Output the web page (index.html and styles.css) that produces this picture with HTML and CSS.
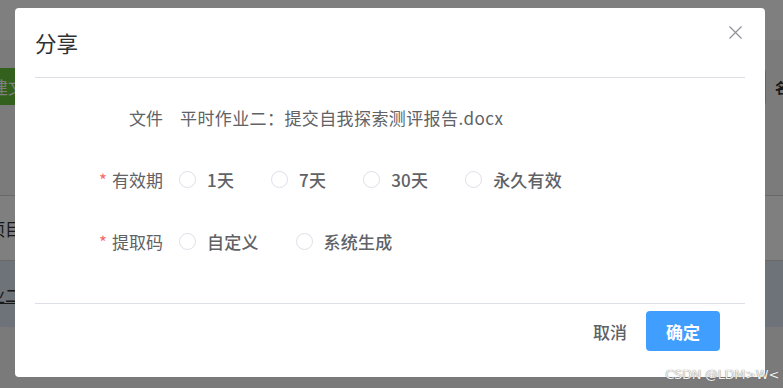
FILE: index.html
```html
<!DOCTYPE html>
<html lang="zh-CN">
<head>
  <meta charset="UTF-8">
  <meta name="viewport" content="width=device-width, initial-scale=1.0">
  <title>分享</title>
  <link rel="stylesheet" href="styles.css">
</head>
<body>
  <!-- page behind the dialog -->
  <div class="page">
    <div class="page-header"></div>
    <div class="toolbar">
      <button class="btn-green">新建文件夹</button>
      <div class="toolbar-right">
        <div class="search-box"></div>
        <span class="sort-label">名</span>
      </div>
    </div>
    <div class="table">
      <div class="table-row"><span class="cell-text">项目</span></div>
      <div class="table-row current"><span class="cell-link">作业二</span></div>
    </div>
  </div>

  <div class="mask"></div>

  <!-- share dialog -->
  <div class="dialog">
    <div class="dialog-header">
      <span class="dialog-title">分享</span>
      <button class="dialog-close" aria-label="关闭">
        <svg width="13" height="13" viewBox="0 0 13 13">
          <path d="M0.5 0.5 L12.5 12.5 M12.5 0.5 L0.5 12.5" stroke="#909399" stroke-width="1.3" fill="none"/>
        </svg>
      </button>
    </div>

    <div class="dialog-body">
      <div class="form-item">
        <label class="form-label">文件</label>
        <div class="form-content file-name">平时作业二：提交自我探索测评报告.docx</div>
      </div>
      <div class="form-item">
        <label class="form-label"><span class="required">*</span>有效期</label>
        <div class="form-content radio-group">
          <label class="radio"><span class="radio-dot"></span>1天</label>
          <label class="radio"><span class="radio-dot"></span>7天</label>
          <label class="radio"><span class="radio-dot"></span>30天</label>
          <label class="radio"><span class="radio-dot"></span>永久有效</label>
        </div>
      </div>
      <div class="form-item">
        <label class="form-label"><span class="required">*</span>提取码</label>
        <div class="form-content radio-group">
          <label class="radio"><span class="radio-dot"></span>自定义</label>
          <label class="radio"><span class="radio-dot"></span>系统生成</label>
        </div>
      </div>
    </div>

    <div class="dialog-footer">
      <button class="btn-text">取消</button>
      <button class="btn-primary">确定</button>
    </div>
  </div>

  <div class="watermark">CSDN @LDM&gt;W&lt;</div>
</body>
</html>
```

FILE: styles.css
```css
body {
  margin: 0;
  width: 783px;
  height: 388px;
  overflow: hidden;
  font-family: "Noto Sans CJK SC", "Noto Sans", sans-serif;
  background: #f5f5f5;
  position: relative;
}

/* page behind */
.page-header {
  height: 40px;
  background: #ffffff;
}

.toolbar {
  height: 155px;
  background: #f7f7f7;
  display: flex;
  justify-content: space-between;
  align-items: flex-start;
  padding-top: 28px;
  box-sizing: border-box;
}

.btn-green {
  margin-left: -38px;
  height: 37px;
  padding: 0 12px;
  border: none;
  background: #67c23a;
  color: #ffffff;
  font-family: inherit;
  font-size: 17px;
}

.toolbar-right {
  display: flex;
  align-items: center;
  gap: 9px;
  margin-right: -6px;
}

.search-box {
  width: 12px;
  height: 36px;
  border: 1px solid #c8cbd0;
  border-radius: 4px;
  background: #ffffff;
}

.sort-label {
  font-size: 14px;
  font-weight: 700;
  color: #303133;
}

.table {
  background: #ffffff;
}

.table-row {
  height: 65px;
  border-top: 1px solid #d0d0d0;
  display: flex;
  align-items: center;
  box-sizing: border-box;
}

.table-row.current {
  height: 67px;
  background: #dde6f3;
}

.cell-text {
  margin-left: -12px;
  font-size: 17px;
  color: #303133;
}

.cell-link {
  margin-left: -29px;
  font-size: 17px;
  color: #303133;
  text-decoration: underline;
}

.mask {
  position: absolute;
  inset: 0;
  background: rgba(0, 0, 0, 0.5);
}

/* dialog */
.dialog {
  position: absolute;
  left: 15px;
  top: 8px;
  width: 750px;
  height: 369px;
  background: #ffffff;
  border-radius: 4px;
  box-sizing: border-box;
  display: flex;
  flex-direction: column;
}

.dialog-header {
  margin: 0 20px;
  padding: 23px 0 22px 0;
  border-bottom: 1px solid #dcdfe6;
  display: flex;
  justify-content: space-between;
  align-items: center;
}

.dialog-title {
  font-size: 21.5px;
  line-height: 24px;
  color: #303133;
}

.dialog-close {
  border: none;
  background: none;
  padding: 0;
  margin-right: 3px;
  margin-top: -22px;
  display: flex;
}

.dialog-body {
  padding: 19px 20px 20px;
}

.form-item {
  display: grid;
  grid-template-columns: 128px 1fr;
  column-gap: 16px;
  align-items: center;
  height: 40px;
  margin-bottom: 22px;
  font-size: 17px;
  color: #606266;
}

.form-label {
  text-align: right;
}

.file-name {
  margin-left: 1px;
  letter-spacing: 0.4px;
}

.required {
  color: #f56c6c;
  margin-right: 5px;
}

.radio-group {
  display: flex;
  align-items: center;
}

.radio {
  display: flex;
  align-items: center;
  margin-right: 37px;
  font-weight: 500;
  letter-spacing: 0.2px;
  color: #606266;
}

.radio-dot {
  width: 15px;
  height: 15px;
  border: 1px solid #dcdfe6;
  border-radius: 50%;
  margin-right: 11px;
}

.dialog-footer {
  margin: 0 20px;
  padding: 7px 25px 0 0;
  border-top: 1px solid #dcdfe6;
  display: flex;
  justify-content: flex-end;
  align-items: center;
  gap: 2px;
}

.btn-text {
  border: none;
  background: none;
  font-family: inherit;
  font-size: 17px;
  font-weight: 500;
  color: #606266;
  padding: 0 17px;
  height: 40px;
}

.btn-primary {
  width: 74px;
  height: 40px;
  border: none;
  border-radius: 4px;
  background: #409eff;
  color: #ffffff;
  font-family: inherit;
  font-size: 17px;
  font-weight: 700;
}

.watermark {
  position: absolute;
  right: 4px;
  bottom: 6px;
  font-family: "DejaVu Sans", sans-serif;
  font-size: 13px;
  color: #f2f2f2;
  text-shadow: 0 0 1px #555555;
  letter-spacing: -0.3px;
}
```
